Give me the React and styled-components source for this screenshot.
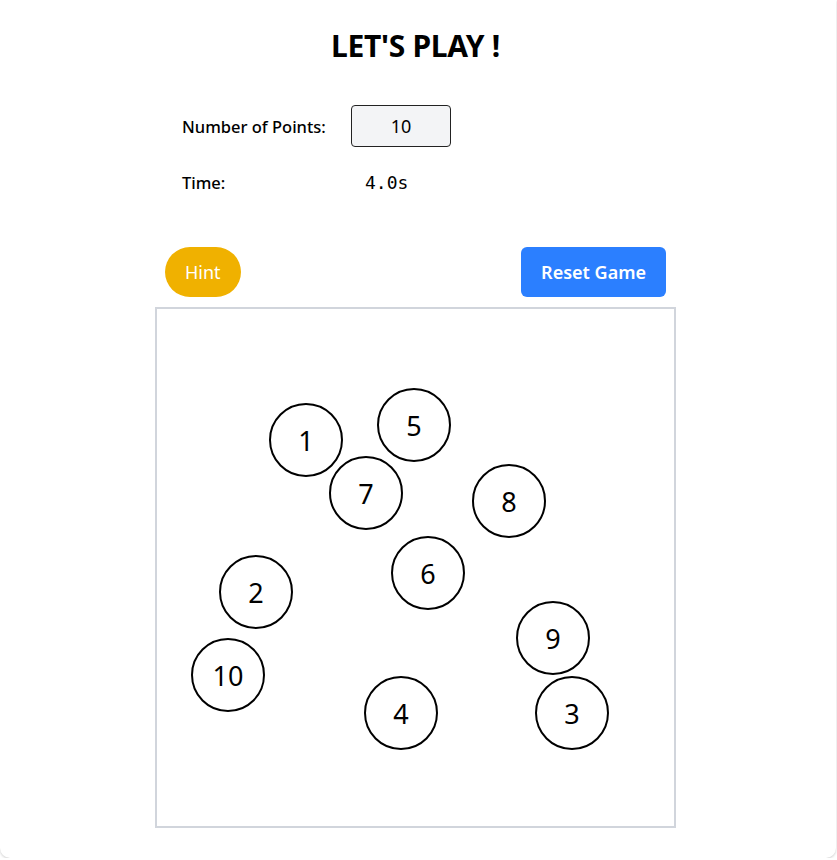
import React from "react";
import styled, { createGlobalStyle } from "styled-components";

const Global = createGlobalStyle`
  html, body { margin: 0; padding: 0; background: #ffffff; }
  body { font-family: "Noto Sans", "Open Sans", sans-serif; color: #000; }
`;

const Card = styled.div`
  box-sizing: border-box;
  width: 836px;
  height: 858px;
  background: #fff;
  border-radius: 0 0 10px 10px;
  box-shadow: 0 1px 3px rgba(0,0,0,0.12), 0 1px 2px rgba(0,0,0,0.08);
  padding: 26px 5px 0 0;
`;

const Column = styled.div`
  width: 521px;
  margin: 0 auto;
  display: flex;
  flex-direction: column;
`;

const Title = styled.h1`
  margin: 0;
  text-align: center;
  font-size: 30px;
  line-height: 40px;
  font-weight: 700;
  letter-spacing: -0.3px;
`;

const Info = styled.div`
  display: grid;
  grid-template-columns: 169px auto;
  row-gap: 24px;
  align-items: center;
  padding-left: 27px;
  margin-top: 39px;
`;

const Label = styled.span`
  font-size: 16.5px;
  font-weight: 500;
`;

const NumberInput = styled.input`
  box-sizing: border-box;
  width: 100px;
  height: 42px;
  border: 1px solid #222;
  border-radius: 4px;
  background: #f3f4f6;
  text-align: center;
  font-family: "Noto Sans", sans-serif;
  font-size: 18px;
  color: #000;
  outline: none;
`;

const TimeValue = styled.span`
  font-family: "DejaVu Sans Mono", monospace;
  font-size: 18px;
  padding-left: 14px;
`;

const ButtonRow = styled.div`
  display: flex;
  justify-content: space-between;
  padding: 0 10px;
  margin-top: 53px;
  margin-bottom: 10px;
`;

const Button = styled.button`
  box-sizing: border-box;
  height: 50px;
  border: none;
  color: #fff;
  font-family: "Noto Sans", sans-serif;
  font-size: 18px;
  font-weight: ${p => (p.$bold ? 600 : 400)};
  background: ${p => p.$bg};
  border-radius: ${p => p.$radius};
  padding: 0 ${p => p.$padX}px;
  cursor: pointer;
`;

const Board = styled.div`
  position: relative;
  box-sizing: border-box;
  width: 521px;
  height: 521px;
  border: 2px solid #d1d5dc;
`;

const Point = styled.div`
  position: absolute;
  box-sizing: border-box;
  width: 74px;
  height: 74px;
  margin: -37px 0 0 -37px;
  border: 2px solid #000;
  border-radius: 50%;
  background: #fff;
  display: flex;
  align-items: center;
  justify-content: center;
  font-size: 27px;
  font-family: "Noto Sans", sans-serif;
`;

const points = [
  { n: 10, x: 228, y: 675 },
  { n: 9, x: 553, y: 638 },
  { n: 8, x: 509, y: 501 },
  { n: 7, x: 366, y: 493 },
  { n: 6, x: 428, y: 573 },
  { n: 5, x: 414, y: 425 },
  { n: 4, x: 401, y: 713 },
  { n: 3, x: 572, y: 713 },
  { n: 2, x: 256, y: 592 },
  { n: 1, x: 306, y: 440 },
];

export default function App() {
  return (
    <>
      <Global />
      <Card>
        <Column>
          <Title>LET'S PLAY !</Title>
          <Info>
            <Label>Number of Points:</Label>
            <NumberInput type="text" defaultValue="10" />
            <Label>Time:</Label>
            <TimeValue>4.0s</TimeValue>
          </Info>
          <ButtonRow>
            <Button $bg="#f0b100" $radius="25px" $padX={20}>Hint</Button>
            <Button $bg="#2b7fff" $radius="6px" $padX={20} $bold>Reset Game</Button>
          </ButtonRow>
          <Board>
            {points.map(p => (
              <Point key={p.n} style={{ left: p.x - 157, top: p.y - 309 }}>
                {p.n}
              </Point>
            ))}
          </Board>
        </Column>
      </Card>
    </>
  );
}
